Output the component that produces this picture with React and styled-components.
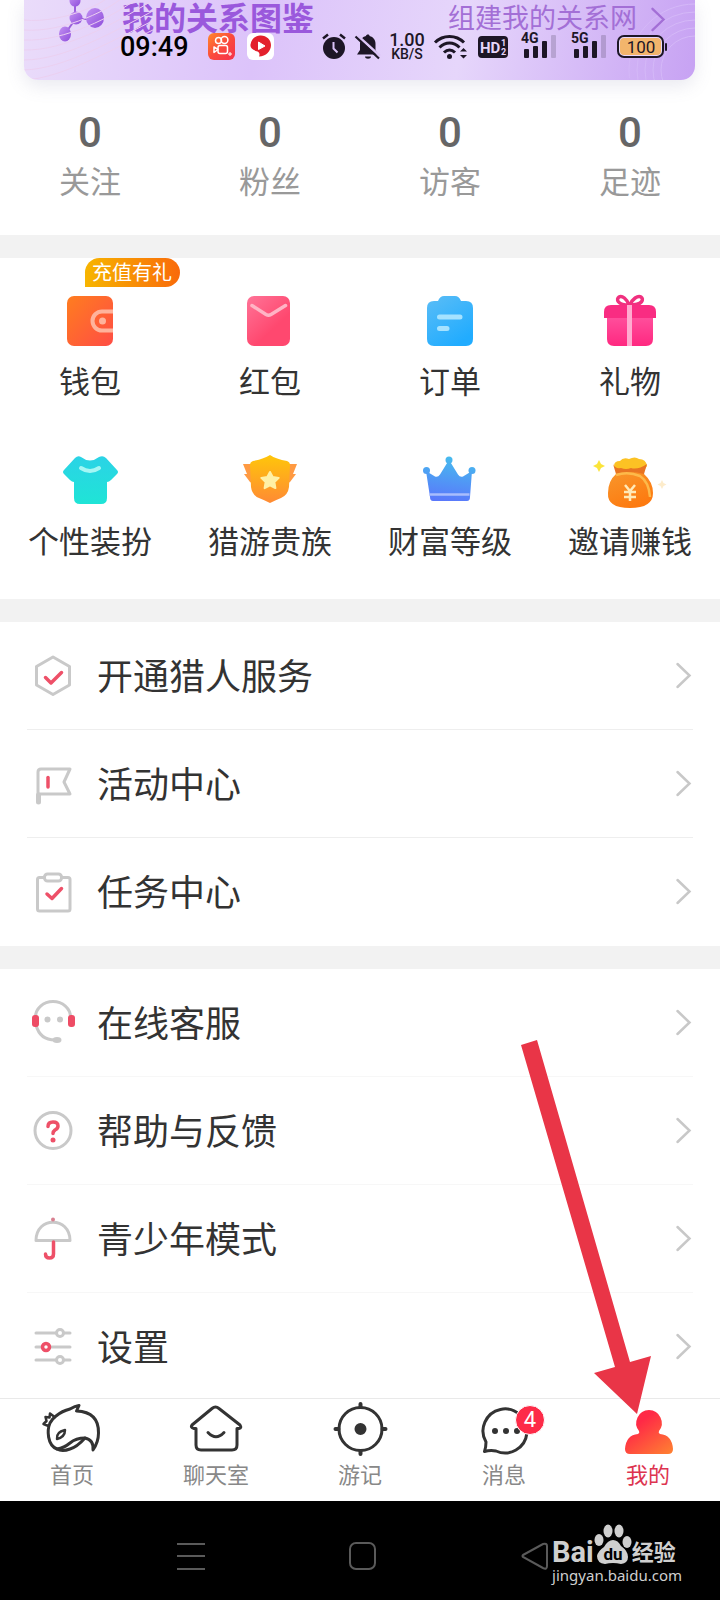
import React from "react";
import styled, { createGlobalStyle, css } from "styled-components";

const GlobalStyle = createGlobalStyle`
  * {
    box-sizing: border-box;
  }
  body {
    margin: 0;
    background: #fff;
    font-family: Roboto, "Noto Sans CJK SC", sans-serif;
    color: #333;
  }
  button {
    font-family: inherit;
    color: inherit;
    border: none;
    background: none;
    padding: 0;
    cursor: pointer;
  }
  a {
    color: inherit;
    text-decoration: none;
  }
  svg {
    display: block;
    overflow: visible;
  }
`;

// ---------- status bar icons ----------

const KuaiIcon = () => (
  <svg width="27" height="27" viewBox="0 0 27 27" fill="none">
    <defs>
      <linearGradient id="kuai" x1="0" y1="0" x2="1" y2="1">
        <stop offset="0" stopColor="#ff8a2c" />
        <stop offset="0.5" stopColor="#fb4a3c" />
        <stop offset="1" stopColor="#f5324e" />
      </linearGradient>
    </defs>
    <rect width="27" height="27" rx="6" fill="url(#kuai)" />
    <g stroke="#fff" strokeWidth="1.500">
      <circle cx="10.500" cy="7.500" r="3" />
      <circle cx="16.500" cy="7" r="3.400" />
      <rect x="10" y="12.500" width="9.500" height="8" rx="2" />
      <path d="M10 16.500 L6 14 V19.500 Z" strokeLinejoin="round" />
      <path d="M22 19v4M20 21h4" strokeWidth="1" />
    </g>
  </svg>
);

const PlayerIcon = () => (
  <svg width="27" height="27" viewBox="0 0 27 27">
    <rect width="27" height="27" rx="6" fill="#fff" />
    <path
      d="M13 2.500C19 2 24 6.500 24 12c0 6-5 11.500-12 11.500 1-2 .5-4-1.500-5C5 17 3 14.500 3.500 11.500 4.500 6 8 3 13 2.500Z"
      fill="#e3202c"
    />
    <path d="M11.500 9 18 13 11.500 16.500Z" fill="#fff" stroke="#fff" strokeLinejoin="round" />
  </svg>
);

const AlarmIcon = () => (
  <svg width="24" height="27" viewBox="0 0 24 27" fill="none">
    <circle cx="12" cy="15" r="11" fill="#1d1626" />
    <path d="M1 5.500 6 1.500M23 5.500 18 1.500" stroke="#1d1626" strokeWidth="2.500" />
    <path d="M11.500 9v6.500l4 4" stroke="#d9c2f6" strokeWidth="2" />
  </svg>
);

const MuteIcon = () => (
  <svg width="27" height="27" viewBox="0 0 27 27" fill="none">
    <path
      d="M14 1.500c1 0 1.500.5 1.500 1.500 4 1 6 4 6 8v6l3 4.500H3l3-4.500v-6c0-4 2-7 6-8 0-1 1-1.500 2-1.500Z"
      fill="#1d1626"
    />
    <path d="M11 23.500h6c0 3-6 3-6 0Z" fill="#1d1626" />
    <path d="M4 3 26 23" stroke="#dcc6f7" strokeWidth="2.500" />
    <path d="M1.500 3.500 25 25.500" stroke="#1d1626" strokeWidth="2.200" />
  </svg>
);

const WifiIcon = () => (
  <svg width="36" height="27" viewBox="0 0 36 27" fill="none">
    <g stroke="#1d1626" strokeWidth="3">
      <path d="M2 9.500C10 1.500 23 1.500 31 9.500" />
      <path d="M6.500 14.500c6-6 14-6 20 0" />
      <path d="M11 19.500c3.500-3.500 7.500-3.500 11 0" />
    </g>
    <circle cx="16.500" cy="23.500" r="2.500" fill="#1d1626" />
    <path d="M27 18.500 30.500 15l3.500 3.500ZM27 22l3.500 3.500 3.500-3.500Z" fill="#1d1626" />
  </svg>
);

const HdIcon = () => (
  <svg width="32" height="22" viewBox="0 0 32 22">
    <rect x="1" width="30" height="22" rx="4" fill="#1d1626" />
    <g fill="#e6d6fa" fontFamily="Roboto" fontWeight="700">
      <text x="3" y="17" fontSize="15">HD</text>
      <text x="24" y="10" fontSize="9">1</text>
      <text x="24" y="19" fontSize="9">2</text>
    </g>
  </svg>
);

const SignalIcon = ({ label }) => (
  <svg width="42" height="27" viewBox="0 0 42 27">
    <text x="4" y="10" fontSize="14" fontFamily="Roboto" fontWeight="700" fill="#1d1626">
      {label}
    </text>
    <g fill="#1d1626">
      <rect x="7" y="16" width="5" height="9" rx="1" />
      <rect x="16" y="13" width="5" height="12" rx="1" />
      <rect x="25" y="8" width="5" height="17" rx="1" />
      <rect x="34" y="2" width="5" height="23" rx="1" opacity="0.18" />
    </g>
  </svg>
);

const BatteryIcon = () => (
  <svg width="51" height="24" viewBox="0 0 51 24">
    <rect x="1" y="1" width="45" height="21" rx="6" fill="#e9d8fb" stroke="#1d1626" strokeWidth="2" />
    <rect x="3" y="3" width="41" height="17" rx="4" fill="#f2b56c" />
    <rect x="48" y="8" width="2" height="8" rx="1" fill="#1d1626" />
    <text x="24" y="18" fontSize="17" fontFamily="Roboto" fontWeight="400" textAnchor="middle" fill="#1d1626">
      100
    </text>
  </svg>
);

// ---------- banner ----------

const MoleculeIcon = () => (
  <svg width="46" height="46" viewBox="0 0 46 46">
    <defs>
      <linearGradient id="mole" x1="0" y1="0" x2="1" y2="1">
        <stop offset="0" stopColor="#c391f2" />
        <stop offset="1" stopColor="#8e4ddb" />
      </linearGradient>
    </defs>
    <path d="M17 2v17h20M18 18 7 34" fill="none" stroke="#9a60dc" strokeWidth="2" />
    <circle cx="17" cy="1" r="5.500" fill="url(#mole)" />
    <circle cx="18" cy="18" r="6.500" fill="url(#mole)" />
    <ellipse cx="37" cy="18" rx="9" ry="10" fill="url(#mole)" />
    <ellipse cx="7" cy="34" rx="6" ry="7.500" fill="url(#mole)" />
  </svg>
);

const BannerWaves = () => (
  <svg width="130" height="80" viewBox="0 0 130 80" fill="none" stroke="#ebd0f0" strokeWidth="1">
    {[0, 1, 2, 3, 4, 5, 6].map((n) => (
      <path key={n} d={`M0 ${20 + n * 10}C40 ${24 + n * 9} 90 ${n * 8} ${90 + n * 12} ${-10 + n * 4}`} />
    ))}
  </svg>
);

const BannerRings = () => (
  <svg width="72" height="80" viewBox="0 0 72 80" fill="none" stroke="#d4b8f7" strokeWidth="1">
    {[34, 42, 50, 58, 66].map((r) => (
      <circle key={r} cx="72" cy="70" r={r} />
    ))}
  </svg>
);

const Chevron = ({ width = 15, height = 27, color = "#c8c8c8" }) => (
  <svg width={width} height={height} viewBox="0 0 15 27" fill="none">
    <path d="M1.500 2 13.500 13.500 1.500 25" stroke={color} strokeWidth="2.500" strokeLinecap="round" />
  </svg>
);

// ---------- shortcut icons ----------

const WalletIcon = () => (
  <svg width="60" height="60" viewBox="0 0 60 60" fill="none">
    <defs>
      <linearGradient id="wallet" x1="0" y1="0" x2="1" y2="1">
        <stop offset="0" stopColor="#ff7d1f" />
        <stop offset="1" stopColor="#ff4d45" />
      </linearGradient>
    </defs>
    <rect x="7" y="5" width="46" height="50" rx="7" fill="url(#wallet)" />
    <path d="M53 20.500H42a9.500 9.500 0 0 0 0 19h11" stroke="#ffb39b" strokeWidth="4" />
    <circle cx="42.500" cy="30" r="3.500" fill="#ffb39b" />
  </svg>
);

const EnvelopeIcon = () => (
  <svg width="60" height="60" viewBox="0 0 60 60" fill="none">
    <defs>
      <linearGradient id="envelope" x1="0" y1="0" x2="0.800" y2="1">
        <stop offset="0" stopColor="#ff7498" />
        <stop offset="0.700" stopColor="#ff486f" />
      </linearGradient>
    </defs>
    <rect x="7" y="5" width="43" height="50" rx="7" fill="url(#envelope)" />
    <path d="M12 14.500 26 23.500q2.500 1.500 5 0L45.500 14.500" stroke="#ffb4c5" strokeWidth="3.500" strokeLinecap="round" />
  </svg>
);

const OrderIcon = () => (
  <svg width="60" height="60" viewBox="0 0 60 60" fill="none">
    <defs>
      <linearGradient id="order" x1="0" y1="0" x2="0.600" y2="1">
        <stop offset="0" stopColor="#5bbdf6" />
        <stop offset="1" stopColor="#21acff" />
      </linearGradient>
    </defs>
    <path
      d="M24 5h11q4 0 6 5h5q7 0 7 7v31q0 7-7 7H14q-7 0-7-7V17q0-7 7-7h4q2-5 6-5Z"
      fill="url(#order)"
    />
    <path d="M19.500 26H40M19.500 37.500H27" stroke="#a5e2ff" strokeWidth="5" strokeLinecap="round" />
  </svg>
);

const GiftIcon = () => (
  <svg width="60" height="60" viewBox="0 0 60 60" fill="none">
    <defs>
      <linearGradient id="gift" x1="0" y1="0" x2="0" y2="1">
        <stop offset="0" stopColor="#ff4f9c" />
        <stop offset="1" stopColor="#ff2880" />
      </linearGradient>
    </defs>
    <path d="M29 14C27 8 22 4 19 6s-2 8 10 8ZM30 14C32 8 38 4 41 6s2 8-11 8Z" stroke="#f0307f" strokeWidth="3.500" />
    <path d="M7 26h46v22q0 7-7 7H14q-7 0-7-7Z" fill="url(#gift)" />
    <path d="M11 14h38q7 0 7 7v6H4v-6q0-7 7-7Z" fill="#f92c82" />
    <rect x="27" y="14" width="5" height="41" fill="#ffabd0" />
  </svg>
);

const ShirtIcon = () => (
  <svg width="60" height="60" viewBox="0 0 60 60" fill="none">
    <defs>
      <linearGradient id="shirt" x1="0" y1="0" x2="0" y2="1">
        <stop offset="0" stopColor="#2bd3e6" />
        <stop offset="1" stopColor="#1fe4d6" />
      </linearGradient>
    </defs>
    <path
      d="M21 6q9 7 18 0 4-2 7 1l11 12q2 2 0 4l-6 6q-2 2-4 2v16q0 6-6 6H20q-6 0-6-6V31q-2 0-4-2l-6-6q-2-2 0-4L15 7q3-3 6-1Z"
      fill="url(#shirt)"
    />
    <path d="M21 17q9 6 18 0" stroke="#a4f6f4" strokeWidth="4" strokeLinecap="round" />
  </svg>
);

const ShieldIcon = () => (
  <svg width="60" height="60" viewBox="0 0 60 60" fill="none">
    <defs>
      <linearGradient id="shield" x1="0" y1="0" x2="0" y2="1">
        <stop offset="0" stopColor="#ffc60a" />
        <stop offset="1" stopColor="#ff8a34" />
      </linearGradient>
    </defs>
    <path d="M3 13h14v22l-7-4-6-8h3l-2-5ZM57 13H43v22l7-4 6-8h-3l2-5Z" fill="#ff9a42" />
    <path
      d="M30 4q6 4 17 6 3 1 3 4l-1 22q-1 8-8 11-5 2-11 5-6-3-11-5-7-3-8-11l-1-22q0-3 3-4 11-2 17-6Z"
      fill="url(#shield)"
    />
    <path
      d="M30 21l2.700 5 6 .9-4.300 4.200 1 6-5.400-2.800-5.400 2.800 1-6-4.300-4.200 6-.9Z"
      fill="#fff0a6"
      stroke="#fff0a6"
      strokeWidth="2"
      strokeLinejoin="round"
    />
  </svg>
);

const CrownIcon = () => (
  <svg width="60" height="60" viewBox="0 0 60 60" fill="none">
    <defs>
      <linearGradient id="crown" gradientUnits="userSpaceOnUse" x1="30" y1="5" x2="24" y2="50">
        <stop offset="0" stopColor="#46bcee" />
        <stop offset="1" stopColor="#5a78fb" />
      </linearGradient>
    </defs>
    <g fill="url(#crown)">
      <circle cx="29" cy="9" r="3.500" />
      <circle cx="6.500" cy="19.500" r="3.500" />
      <circle cx="52" cy="19.500" r="3.500" />
      <path d="M6 20l9 5.500q3 1 5-2l8-13h2l8 13q2 3 5 2l9-5.500-2 26q0 4-3 4H13q-3 0-3-4Z" />
    </g>
    <path d="M9.500 43.500h40" stroke="#a9bdfd" strokeWidth="2.500" />
  </svg>
);

const MoneyBagIcon = () => (
  <svg width="60" height="60" viewBox="0 0 60 60" fill="none">
    <defs>
      <linearGradient id="bag" x1="0" y1="0" x2="0.500" y2="1">
        <stop offset="0" stopColor="#f8972c" />
        <stop offset="1" stopColor="#fd7a10" />
      </linearGradient>
    </defs>
    <path d="M14 15q0-5 6-5 3-4 9-2 6-3 10 0 7 0 8 7l-6 9H18Z" fill="#fcc224" />
    <path d="M13 13q2 5 8 4 5 2 10 0 7 2 16-4l-3 10H16Z" fill="#e87422" />
    <path d="M16 23q14-4 28 0 9 8 9 19 0 15-23 15T8 42q0-12 8-19Z" fill="url(#bag)" />
    <path d="M16 24q12-4 24 1 9 6 10 21" stroke="#fdb94a" strokeWidth="2.500" />
    <path d="M25 34l5 6 5-6M30 40v10M24 41h12M24 46h12" stroke="#ffe9b8" strokeWidth="2.500" />
    <path d="M-1 9l2 4 4 2-4 2-2 4-2-4-4-2 4-2Z" fill="#fbe43a" />
    <path d="M62 29l1.500 3 3 1.500-3 1.500-1.500 3-1.500-3-3-1.500 3-1.500Z" fill="#fdeccb" />
  </svg>
);

// ---------- menu icons ----------

const grey = { stroke: "#c9c9c9", strokeWidth: 3, strokeLinejoin: "round", strokeLinecap: "round" };
const red = { stroke: "#ee5068", strokeWidth: 3.5, strokeLinejoin: "round", strokeLinecap: "round" };

const MenuSvg = ({ children }) => (
  <svg width="44" height="44" viewBox="0 1 44 44" fill="none">
    {children}
  </svg>
);

const HunterIcon = () => (
  <MenuSvg>
    <path d="M22 4 38.500 13.500V32L22 41.500 5.500 32V13.500Z" {...grey} />
    <path d="M14.500 24.500 20 30 30.500 19.500" {...red} />
  </MenuSvg>
);

const FlagIcon = () => (
  <MenuSvg>
    <path d="M7 41V11q0-3 3-3H39L33 21 39 33H8" {...grey} />
    <path d="M7.500 34V41" {...grey} strokeWidth="5" />
    <path d="M17 16.500V26" {...red} />
  </MenuSvg>
);

const TaskIcon = () => (
  <MenuSvg>
    <path d="M13 8.500H8.500q-2 0-2 2V40q0 2 2 2H37q2 0 2-2V10.500q0-2-2-2H31" {...grey} />
    <rect x="13.500" y="5" width="17" height="7" rx="3" {...grey} />
    <path d="M16 25 21 29.500 30.500 19.500" {...red} />
  </MenuSvg>
);

const ServiceIcon = () => (
  <MenuSvg>
    <path d="M4.500 17a17.500 15.500 0 0 1 35 0" {...grey} />
    <path d="M5 25q4 15 19 15" {...grey} />
    <ellipse cx="26" cy="40" rx="4.500" ry="3" fill="#c9c9c9" />
    <rect x="1" y="15" width="7" height="12" rx="3" fill="#ee4c65" />
    <rect x="37" y="15" width="7" height="12" rx="3" fill="#ee4c65" />
    <circle cx="16.500" cy="19.500" r="3" fill="#c9c9c9" />
    <circle cx="29" cy="19.500" r="3" fill="#c9c9c9" />
  </MenuSvg>
);

const HelpIcon = () => (
  <MenuSvg>
    <circle cx="22" cy="22.500" r="18" {...grey} />
    <path d="M17 18.500q0-4.500 5-4.500t5 4q0 2.500-3 4-2 1.500-2 3.500" {...red} />
    <circle cx="22" cy="32" r="2.500" fill="#ee5068" />
  </MenuSvg>
);

const TeenIcon = () => (
  <MenuSvg>
    <path d="M5 24.500C5 0 39 0 39 24.500Z" {...grey} />
    <circle cx="22" cy="3.500" r="2" fill="#d88090" />
    <path d="M22.500 26V38q0 4-4 4t-4-4" {...red} />
  </MenuSvg>
);

const SettingsIcon = () => (
  <MenuSvg>
    <path d="M5 9H39M5 23H39M5 36H39" {...grey} />
    <circle cx="29" cy="9" r="3.500" {...grey} fill="#fff" />
    <circle cx="15" cy="23" r="3.500" {...red} fill="#fff" />
    <circle cx="29" cy="36" r="3.500" {...grey} fill="#fff" />
  </MenuSvg>
);

// ---------- tab icons ----------

const TabSvg = ({ children }) => (
  <svg
    width="60"
    height="56"
    viewBox="0 0 60 56"
    fill="none"
    stroke="#333"
    strokeWidth="3"
    strokeLinecap="round"
    strokeLinejoin="round"
  >
    {children}
  </svg>
);

const WhaleIcon = () => (
  <TabSvg>
    <path d="M14 17q6-5 14-7 5-3 9-3.500L34.500 12Q57 13 56.500 34q0 9-5.500 17 1-10-8-12-9 0-15 5-6 5-13 6C5 46 5 31 8 24q2-4 6-7Z" />
    <path d="M15 50q5 3 13 0 7-2 15-11" />
    <path d="M6.500 27 1.500 25l3-3-1-4 4 .500.500-4 4 3" strokeWidth="2.500" />
    <path d="M15 40q-1-7 8-9 0 7-8 9Z" strokeWidth="2.500" />
  </TabSvg>
);

const HouseIcon = () => (
  <TabSvg>
    <path d="M26 9.500q3.500-3 7 0L54 26q2 3-1 3.500h-2V46q0 5-5 5H15q-5 0-5-5V29.500H8q-4-1-2-3.500Z" />
    <path d="M22 33.500q8 8.500 16 0" />
  </TabSvg>
);

const CompassIcon = () => (
  <TabSvg>
    <circle cx="30.500" cy="30" r="21.500" />
    <circle cx="30.500" cy="30" r="4.500" fill="#333" />
    <path d="M30.500 5v3M30.500 52v3M5.500 30h3M52.500 30h3" strokeWidth="4" />
  </TabSvg>
);

const ChatIcon = () => (
  <TabSvg>
    <path d="M12 43A22 22 0 1 1 22 52Q16 51 10.500 52.500 12 48 12 43Z" />
    <g fill="#333" stroke="none">
      <circle cx="21" cy="32" r="3" />
      <circle cx="32" cy="32" r="3" />
      <circle cx="43" cy="32" r="3" />
    </g>
  </TabSvg>
);

const MeIcon = () => (
  <svg width="60" height="56" viewBox="0 0 60 56">
    <defs>
      <linearGradient id="me" gradientUnits="userSpaceOnUse" x1="20" y1="15" x2="50" y2="56">
        <stop offset="0.150" stopColor="#ff2946" />
        <stop offset="1" stopColor="#ff7f32" />
      </linearGradient>
    </defs>
    <path
      d="M31 11a13 13 0 0 1 10 21q-1 2 1 3 12 1 13 15 0 5-5 5H12q-5 0-5-5 1-14 13-15 2-1 1-3A13 13 0 0 1 31 11Z"
      fill="url(#me)"
    />
  </svg>
);

const PawIcon = () => (
  <svg width="38" height="42" viewBox="0 0 38 42" fill="#cfcfcf">
    <ellipse cx="5" cy="17" rx="4.500" ry="6" />
    <ellipse cx="14" cy="8" rx="4.500" ry="6.500" />
    <ellipse cx="25" cy="8" rx="4.500" ry="6.500" />
    <ellipse cx="33" cy="19" rx="4.500" ry="6" />
    <path d="M19 17q5 0 8 6 7 5 7 11 0 6-7 7-8-2-16 0-8-1-8-8 1-5 7-9 4-7 9-7Z" />
    <text x="19" y="37" fontSize="17" fontFamily="Roboto" fontWeight="700" textAnchor="middle" fill="#000">
      du
    </text>
  </svg>
);

const GuideArrow = () => (
  <svg width="130" height="374" viewBox="0 0 130 374">
    <path d="M0 5 16 0 109 322 130 316 116 374 73 333 94 327Z" fill="#e93547" />
  </svg>
);

// ---------- data ----------

const stats = [
  { label: "关注", value: 0 },
  { label: "粉丝", value: 0 },
  { label: "访客", value: 0 },
  { label: "足迹", value: 0 },
];

const shortcuts = [
  { label: "钱包", Icon: WalletIcon, tag: "充值有礼" },
  { label: "红包", Icon: EnvelopeIcon },
  { label: "订单", Icon: OrderIcon },
  { label: "礼物", Icon: GiftIcon },
  { label: "个性装扮", Icon: ShirtIcon },
  { label: "猎游贵族", Icon: ShieldIcon },
  { label: "财富等级", Icon: CrownIcon },
  { label: "邀请赚钱", Icon: MoneyBagIcon },
];

const centerMenu = [
  { label: "开通猎人服务", Icon: HunterIcon },
  { label: "活动中心", Icon: FlagIcon },
  { label: "任务中心", Icon: TaskIcon },
];

const supportMenu = [
  { label: "在线客服", Icon: ServiceIcon },
  { label: "帮助与反馈", Icon: HelpIcon },
  { label: "青少年模式", Icon: TeenIcon },
  { label: "设置", Icon: SettingsIcon },
];

const tabs = [
  { label: "首页", Icon: WhaleIcon },
  { label: "聊天室", Icon: HouseIcon },
  { label: "游记", Icon: CompassIcon },
  { label: "消息", Icon: ChatIcon, unread: 4 },
  { label: "我的", Icon: MeIcon, active: true },
];

const MenuList = ({ items, $faint }) => (
  <Menu>
    {items.map(({ label, Icon }) => (
      <MenuItem key={label} $faint={$faint}>
        <MenuLink href="#">
          <Icon />
          <MenuLabel>{label}</MenuLabel>
          <Chevron />
        </MenuLink>
      </MenuItem>
    ))}
  </Menu>
);

const App = () => {
  return (
    <Page>
      <GlobalStyle />
      <StatusBar>
        <StatusLeft>
          <Clock>09:49</Clock>
          <AppIcons>
            <KuaiIcon />
            <PlayerIcon />
          </AppIcons>
        </StatusLeft>
        <StatusRight>
          <AlarmIcon />
          <MuteIcon />
          <Speed>
            <SpeedValue>1.00</SpeedValue>
            <SpeedUnit>KB/S</SpeedUnit>
          </Speed>
          <WifiIcon />
          <HdIcon />
          <SignalIcon label="4G" />
          <SignalIcon label="5G" />
          <BatteryIcon />
        </StatusRight>
      </StatusBar>

      <Banner href="#">
        <Backdrop $side="left">
          <BannerWaves />
        </Backdrop>
        <Backdrop $side="right">
          <BannerRings />
        </Backdrop>
        <MoleculeIcon />
        <BannerTitle>我的关系图鉴</BannerTitle>
        <BannerMore>
          组建我的关系网
          <Chevron width={14} height={25} color="#a36fd6" />
        </BannerMore>
      </Banner>

      <Stats>
        {stats.map(({ label, value }) => (
          <Stat key={label}>
            <StatValue>{value}</StatValue>
            <StatLabel>{label}</StatLabel>
          </Stat>
        ))}
      </Stats>
      <Divider />
      <Shortcuts>
        {shortcuts.map(({ label, Icon, tag }) => (
          <Shortcut key={label}>
            {tag && <Tag>{tag}</Tag>}
            <Icon />
            <ShortcutLabel>{label}</ShortcutLabel>
          </Shortcut>
        ))}
      </Shortcuts>
      <Divider />
      <MenuList items={centerMenu} />
      <Divider />
      <MenuList items={supportMenu} $faint />

      <TabBar>
        {tabs.map(({ label, Icon, unread, active }) => (
          <Tab key={label} $active={active}>
            <TabIcon>
              <Icon />
              {unread && <Unread>{unread}</Unread>}
            </TabIcon>
            {label}
          </Tab>
        ))}
      </TabBar>

      <SystemBar>
        <SystemButton aria-label="menu">
          <svg width="28" height="28" viewBox="0 0 28 28" stroke="#5a5a5a" strokeWidth="2">
            <path d="M0 1H28M0 13H28M0 26H28" />
          </svg>
        </SystemButton>
        <SystemButton aria-label="home">
          <svg width="28" height="28" viewBox="0 0 28 28" fill="none" stroke="#5a5a5a" strokeWidth="2">
            <rect x="1" y="0" width="25" height="26" rx="6" />
          </svg>
        </SystemButton>
        <SystemButton aria-label="back">
          <svg width="28" height="28" viewBox="0 0 28 28" fill="none" stroke="#5a5a5a" strokeWidth="2">
            <path d="M2 12 22 1q4-1 4 2v20q0 4-4 2L2 14q-1-1 0-2Z" />
          </svg>
        </SystemButton>
        <Watermark>
          <Brand>
            <BrandName>Bai</BrandName>
            <PawIcon />
            <BrandSuffix>经验</BrandSuffix>
          </Brand>
          <BrandUrl>jingyan.baidu.com</BrandUrl>
        </Watermark>
      </SystemBar>

      <ArrowLayer>
        <GuideArrow />
      </ArrowLayer>
    </Page>
  );
};

const Page = styled.div`
  position: relative;
  display: flex;
  flex-direction: column;
  min-height: 100vh;
  overflow: hidden;
  background: #fff;
`;

const StatusBar = styled.div`
  position: absolute;
  top: 30px;
  left: 0;
  right: 0;
  z-index: 2;
  display: flex;
  justify-content: space-between;
  align-items: center;
  height: 33px;
  padding: 0 52px 0 120px;
`;

const StatusLeft = styled.div`
  display: flex;
  align-items: center;
  gap: 19px;
`;

const Clock = styled.span`
  font-size: 27px;
  font-weight: 500;
  line-height: 32px;
  color: #000;
`;

const AppIcons = styled.div`
  display: flex;
  gap: 12px;
`;

const StatusRight = styled.div`
  display: flex;
  align-items: center;
  gap: 8px;
`;

const Speed = styled.div`
  display: flex;
  flex-direction: column;
  align-items: center;
  width: 36px;
  font-weight: 500;
  color: #1d1626;
`;

const SpeedValue = styled.span`
  font-size: 18px;
  line-height: 15px;
`;

const SpeedUnit = styled.span`
  font-size: 14px;
  line-height: 14px;
`;

const Banner = styled.a`
  position: relative;
  display: flex;
  align-items: flex-start;
  height: 80px;
  margin: 0 25px 0 24px;
  padding: 0 30px 0 34px;
  border-radius: 0 0 14px 14px;
  background: linear-gradient(100deg, #eadcfa 0%, #dcc3fa 35%, #e6d6fb 65%, #c7a2f3 100%);
  box-shadow: 0 6px 18px rgba(120, 120, 160, 0.16);
`;

const Backdrop = styled.div`
  position: absolute;
  top: 0;
  ${({ $side }) => $side}: 0;
  overflow: hidden;
  height: 80px;
  border-radius: 0 0 14px 14px;

  svg {
    overflow: hidden;
  }
`;

const BannerTitle = styled.span`
  margin-left: 18px;
  font-size: 32px;
  font-weight: 700;
  line-height: 38px;
  color: #9a58dc;
`;

const BannerMore = styled.span`
  position: relative;
  display: flex;
  align-items: center;
  gap: 14px;
  margin-left: auto;
  font-size: 27px;
  line-height: 38px;
  color: #a36fd6;
`;

const Stats = styled.div`
  display: grid;
  grid-template-columns: repeat(4, 1fr);
  padding: 31px 0 32px;
`;

const Stat = styled.div`
  display: flex;
  flex-direction: column;
  align-items: center;
  gap: 8px;
`;

const StatValue = styled.span`
  font-family: Roboto, sans-serif;
  font-size: 42px;
  font-weight: 500;
  line-height: 44px;
  color: #666;
`;

const StatLabel = styled.span`
  font-size: 31px;
  line-height: 40px;
  color: #999;
`;

const Divider = styled.div`
  height: 23px;
  background: #f2f2f2;
`;

const Shortcuts = styled.div`
  display: grid;
  grid-template-columns: repeat(4, 1fr);
  row-gap: 48px;
  padding: 33px 0 36px;
`;

const Shortcut = styled.button`
  position: relative;
  display: flex;
  flex-direction: column;
  align-items: center;
  gap: 12px;
`;

const ShortcutLabel = styled.span`
  font-size: 31px;
  line-height: 40px;
`;

const Tag = styled.span`
  position: absolute;
  top: -33px;
  left: 50%;
  z-index: 1;
  margin-left: -5px;
  padding: 1px 8px 0 7px;
  border-radius: 15px 15px 15px 0;
  background: linear-gradient(90deg, #f7b500, #f96a0a);
  color: #fff;
  font-size: 20px;
  line-height: 28px;
  white-space: nowrap;
`;

const Menu = styled.ul`
  margin: 0;
  padding: 0 27px;
  list-style: none;
`;

const MenuItem = styled.li`
  border-bottom: 1px solid ${({ $faint }) => ($faint ? "#f7f7f7" : "#eee")};

  &:last-child {
    border-bottom-color: transparent;
  }
`;

const MenuLink = styled.a`
  display: flex;
  align-items: center;
  gap: 22px;
  height: 107px;
  padding: 0 2px 0 4px;
`;

const MenuLabel = styled.span`
  flex: 1;
  padding-top: 4px;
  font-size: 36px;
  line-height: 48px;
`;

/* the last menu row runs on a little under the bar */
const TabBar = styled.nav`
  position: relative;
  display: grid;
  grid-template-columns: repeat(5, 1fr);
  height: 103px;
  margin-top: -3px;
  border-top: 1px solid #e9e9e9;
  background: #fff;
`;

const Tab = styled.button`
  display: flex;
  flex-direction: column;
  align-items: center;
  gap: 7px;
  font-size: 22px;
  line-height: 28px;
  color: #888;
  ${({ $active }) =>
    $active &&
    css`
      color: #dd3450;
    `}
`;

const TabIcon = styled.span`
  position: relative;
`;

const Unread = styled.span`
  position: absolute;
  top: 6px;
  left: 41px;
  width: 30px;
  height: 30px;
  border: 1px solid #fff;
  border-radius: 50%;
  background: #fd2b48;
  color: #fff;
  font-size: 22px;
  line-height: 28px;
  text-align: center;
`;

const SystemBar = styled.footer`
  position: relative;
  display: flex;
  flex: 1;
  justify-content: center;
  align-items: center;
  gap: 144px;
  min-height: 100px;
  padding: 12px 0 0 6px;
  background: #000;
`;

const SystemButton = styled.button`
  width: 28px;
  height: 28px;
`;

const Watermark = styled.div`
  position: absolute;
  top: 22px;
  right: 38px;
  color: #cfcfcf;
`;

const Brand = styled.div`
  display: flex;
  align-items: flex-end;
`;

const BrandName = styled.span`
  font-size: 29px;
  font-weight: 700;
  line-height: 26px;
`;

const BrandSuffix = styled.span`
  font-size: 22px;
  font-weight: 700;
  line-height: 24px;
`;

const BrandUrl = styled.div`
  font-family: "Noto Sans", sans-serif;
  font-size: 15px;
  line-height: 20px;
`;

const ArrowLayer = styled.div`
  position: absolute;
  right: 69px;
  bottom: 187px;
  z-index: 3;
  pointer-events: none;
`;

export default App;
